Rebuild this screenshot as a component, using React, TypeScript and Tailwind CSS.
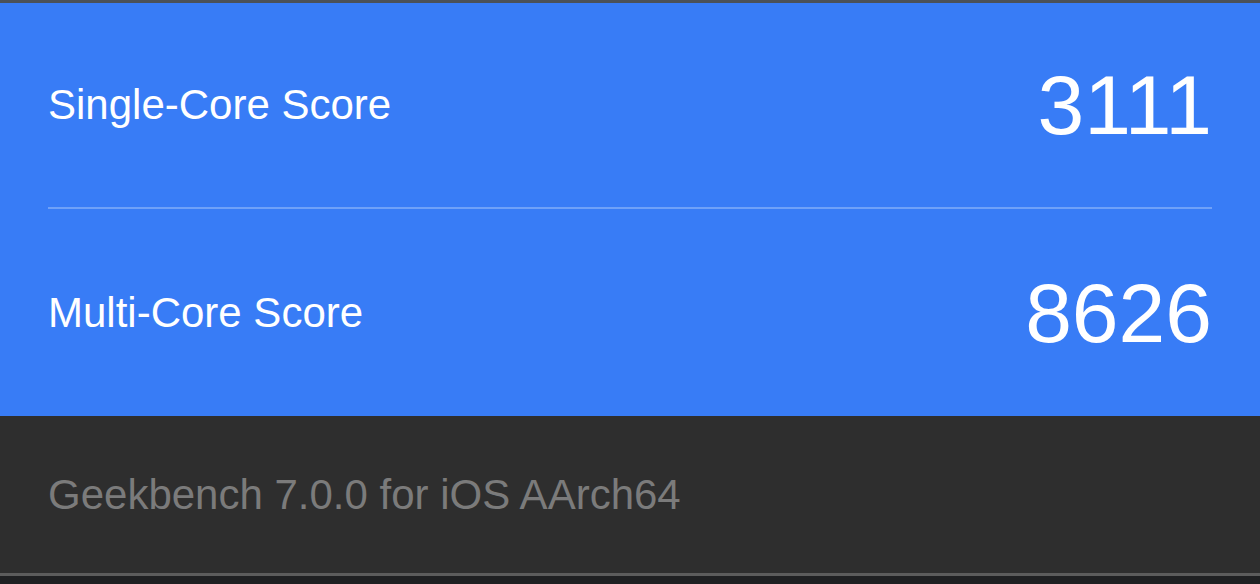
export default function App() {
  const rows = [
    { label: "Single-Core Score", value: "3111" },
    { label: "Multi-Core Score", value: "8626" },
  ];

  return (
    <div className="w-[1260px] h-[584px] flex flex-col bg-[#1f2022] font-['Liberation_Sans',Arial,sans-serif] overflow-hidden">
      <div className="h-[3px] bg-[#4b5158]" />
      <div className="bg-[#387cf6] px-12 text-white">
        <div className="h-[204px] flex items-center justify-between">
          <span className="text-[42px] leading-none">{rows[0].label}</span>
          <span className="text-[84px] leading-none">{rows[0].value}</span>
        </div>
        <div className="h-[2px] bg-[#6fa1f8]" />
        <div className="h-[207px] flex items-center justify-between">
          <span className="text-[42px] leading-none">{rows[1].label}</span>
          <span className="text-[84px] leading-none">{rows[1].value}</span>
        </div>
      </div>
      <div className="h-[157px] bg-[#2e2e2e] px-12 flex items-center">
        <span className="text-[42px] leading-none text-[#7b7b7b]">
          Geekbench 7.0.0 for iOS AArch64
        </span>
      </div>
      <div className="h-[3px] bg-[#5c5c5c]" />
    </div>
  );
}
